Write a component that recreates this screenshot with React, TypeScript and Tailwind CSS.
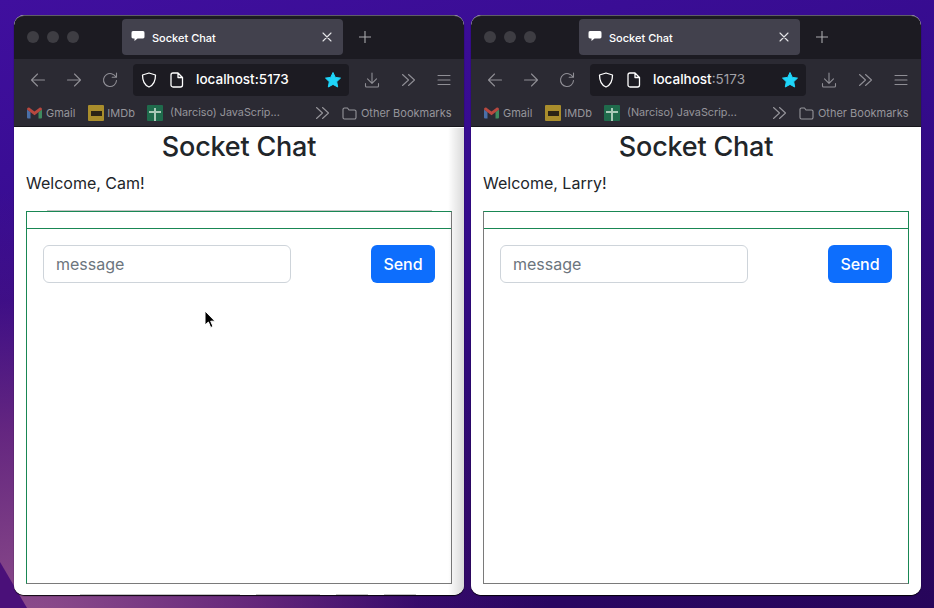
import React from 'react';

const stroke = { fill: 'none', stroke: 'currentColor', strokeWidth: 1.1, strokeLinecap: 'round', strokeLinejoin: 'round' } as const;

const Back = () => (
  <svg width="16" height="16" viewBox="0 0 16 16" {...stroke}><path d="M14.500 8H1.500M7.500 2 1.500 8l6 6" /></svg>
);
const Forward = () => (
  <svg width="16" height="16" viewBox="0 0 16 16" {...stroke}><path d="M1.500 8h13M8.500 2l6 6-6 6" /></svg>
);
const Reload = () => (
  <svg width="16" height="16" viewBox="0 0 16 16" {...stroke}><path d="M14.500 8.500A6.500 6.500 0 1 1 9.500 1.700c1.800.4 3.400 1.600 4.600 3.300M14.500 1v4.300h-4.300" /></svg>
);
const Shield = () => (
  <svg width="16" height="16" viewBox="0 0 16 16" {...stroke} strokeWidth={1.300}><path d="M8 1 14.500 3c0 6-1.500 10-6.500 12C3 13 1.500 9 1.500 3z" /></svg>
);
const PageIcon = () => (
  <svg width="14" height="16" viewBox="0 0 14 16" {...stroke} strokeWidth={1.300}><path d="M3 1h5l4.500 4.500V13a2 2 0 0 1-2 2H3a2 2 0 0 1-2-2V3a2 2 0 0 1 2-2zM8 1v4.500h4.500" /></svg>
);
const Download = () => (
  <svg width="16" height="16" viewBox="0 0 16 16" {...stroke}><path d="M8 1v10M3.500 6.800 8 11.300l4.500-4.500M1.500 11.500V14a1 1 0 0 0 1 1h11a1 1 0 0 0 1-1v-2.500" /></svg>
);
const Chevrons = () => (
  <svg width="15" height="14" viewBox="0 0 15 14" {...stroke}><path d="m1.500 1.500 6 5.500-6 5.500M7.500 1.500l6 5.500-6 5.500" /></svg>
);
const Menu = () => (
  <svg width="14" height="12" viewBox="0 0 14 12" {...stroke}><path d="M1 1.500h12M1 6h12M1 10.500h12" /></svg>
);
const Folder = () => (
  <svg width="15" height="13" viewBox="0 0 15 13" {...stroke}><path d="M1 2.500a1.500 1.500 0 0 1 1.500-1.500h3L7 3h5.500A1.500 1.500 0 0 1 14 4.500v6a1.500 1.500 0 0 1-1.500 1.500h-10A1.500 1.500 0 0 1 1 10.500z" /></svg>
);
const Gmail = () => (
  <svg width="15" height="12" viewBox="0 0 15 12">
    <path d="M0 2.500v8a1 1 0 0 0 1 1h2.500V5z" fill="#4a6fa8" />
    <path d="M15 2.500v8a1 1 0 0 1-1 1h-2.500V5z" fill="#3f8a5f" />
    <path d="M0 2.500C0 .8 1.500 0 2.800 1l4.700 3.600L12.200 1c1.300-1 2.800-.2 2.800 1.500L7.500 8.200z" fill="#b8483f" />
  </svg>
);
const Imdb = () => (
  <span className="flex w-4 h-4 items-center justify-center bg-[#a98d2c] rounded-[1px]">
    <span className="w-[11px] h-[5px] bg-[#2b2416]" />
  </span>
);
const Sheets = () => (
  <span className="relative flex w-4 h-4 bg-[#1f6b4c] rounded-[1px]">
    <span className="absolute left-[7px] top-[3px] w-[2px] h-[13px] bg-[#a9c9b8]" />
    <span className="absolute left-[2px] top-[6px] w-[12px] h-[2px] bg-[#a9c9b8]" />
  </span>
);
const Cursor = () => (
  <svg className="absolute left-[190px] top-[183px]" width="13" height="19" viewBox="0 0 13 19">
    <path d="M1 1v14l3.400-3 2.300 5.500 2.300-1-2.300-5.300H11z" fill="#000" stroke="#fff" strokeWidth="1" />
  </svg>
);

type BrowserProps = {
  name: string;
  dimPort?: boolean;
  boxClass: string;
  shaded?: boolean;
  withCursor?: boolean;
};

const Browser = ({ name, dimPort, boxClass, shaded, withCursor }: BrowserProps) => (
  <div className="relative w-[450px] h-[580px] flex flex-col rounded-[10px] overflow-hidden bg-white shadow-[0_1px_1px_rgba(0,0,0,0.9)]">
    {/* tab strip */}
    <div className="h-[44px] pb-px flex items-center bg-[#1c1b22] border-t border-[#5f5e66] rounded-t-[10px]">
      <span className="ml-[13px] w-3 h-3 rounded-full bg-[#3e3d43]" />
      <span className="ml-2 w-3 h-3 rounded-full bg-[#3e3d43]" />
      <span className="ml-2 w-3 h-3 rounded-full bg-[#3e3d43]" />
      <div className="ml-[43px] w-[221px] h-9 flex items-center rounded-[4px] bg-[#42414d] text-white">
        <svg className="ml-[9px] -mt-[3px]" width="14" height="12" viewBox="0 0 14 12">
          <path d="M2.500 1h9A1.800 1.800 0 0 1 13.500 3v3.500a1.800 1.800 0 0 1-2 2H6.500L3.500 11V8.500h-1A1.800 1.800 0 0 1 .5 6.500V3a1.800 1.800 0 0 1 2-2z" fill="#fff" />
        </svg>
        <span className="ml-[7px] mt-[2px] text-[11px] font-medium">Socket Chat</span>
        <svg className="ml-auto mr-[11px] text-[#e4e4e7]" width="10" height="10" viewBox="0 0 10 10" {...stroke}>
          <path d="m1 1 8 8M9 1 1 9" />
        </svg>
      </div>
      <svg className="ml-[16px] text-[#a9a9ad]" width="12" height="12" viewBox="0 0 12 12" {...stroke}>
        <path d="M6 0v12M0 6h12" />
      </svg>
    </div>

    {/* toolbar */}
    <div className="h-[41px] flex items-center bg-[#2b2a33] text-[#8f8e95]">
      <span className="ml-4"><Back /></span>
      <span className="ml-5"><Forward /></span>
      <span className="ml-5"><Reload /></span>
      <div className="ml-[15px] w-[216px] h-8 flex items-center rounded-[4px] bg-[#1c1b22] text-white">
        <span className="ml-2"><Shield /></span>
        <span className="ml-[13px]"><PageIcon /></span>
        <span className="ml-3 text-[13.500px] font-medium">
          localhost{dimPort ? <span className="text-[#a3a2a8] font-normal">:5173</span> : ':5173'}
        </span>
        <svg className="ml-auto mr-2" width="16" height="16" viewBox="0 0 16 16">
          <path d="M8 .5l2.300 4.900 5.200.7-3.800 3.600 1 5.300L8 12.400 3.300 15l1-5.300L.5 6.100l5.200-.7z" fill="#1fd5f9" stroke="#1fd5f9" strokeLinejoin="round" />
        </svg>
      </div>
      <span className="ml-[15px]"><Download /></span>
      <span className="ml-[21px]"><Chevrons /></span>
      <span className="ml-[21px]"><Menu /></span>
    </div>

    {/* bookmarks */}
    <div className="h-[27px] flex items-center bg-[#2b2a33] text-[11px] text-[#96959b] border-b border-[#17161c]">
      <span className="ml-[13px]"><Gmail /></span>
      <span className="ml-1">Gmail</span>
      <span className="ml-[13px]"><Imdb /></span>
      <span className="ml-[3px]">IMDb</span>
      <span className="ml-3"><Sheets /></span>
      <span className="ml-[7px] w-[110px] whitespace-nowrap text-[10.800px]">(Narciso) JavaScrip...</span>
      <span className="ml-[35px]"><Chevrons /></span>
      <span className="ml-3"><Folder /></span>
      <span className="ml-1 whitespace-nowrap">Other Bookmarks</span>
    </div>

    {/* page */}
    <div className="relative flex-1 flex flex-col px-3 bg-white text-[#212529]">
      <h1 className="pt-px text-center text-[27px] tracking-[-0.2px] leading-[38px] font-medium">Socket Chat</h1>
      <p className="mt-[5px] text-base leading-6">Welcome, {name}!</p>
      <div className={`mt-4 h-[373px] border ${boxClass}`}>
        <div className="h-4" />
        <div className="border-t border-[#198754] flex justify-between p-4">
          <input
            placeholder="message"
            className="w-[248px] h-[38px] px-3 text-base border border-[#ced4da] rounded-[6px] outline-none placeholder:text-[#6c757d]"
          />
          <button className="w-16 h-[38px] rounded-[6px] bg-[#0d6efd] text-white text-base font-medium">Send</button>
        </div>
      </div>
      {withCursor && <Cursor />}
    </div>
    {shaded && (
      <>
        <div className="absolute right-0 top-[113px] bottom-0 w-[16px] bg-gradient-to-r from-transparent to-black/15" />
        <span className="absolute left-[33px] top-[195px] w-[385px] h-px bg-[#c4c4c4]" />
        <div className="absolute left-[66px] bottom-0 flex gap-4">
          <span className="w-[160px] h-px bg-[#c4c4c4]" />
          <span className="w-16 h-px bg-[#c4c4c4]" />
          <span className="w-8 h-px bg-[#c4c4c4]" />
          <span className="w-8 h-px bg-[#c4c4c4]" />
        </div>
      </>
    )}
  </div>
);

export default function App() {
  return (
    <div
      className="relative w-[934px] h-[608px] overflow-hidden flex gap-[7px] pl-[14px] pt-[15px] font-['Inter','Noto_Sans',sans-serif] bg-[radial-gradient(ellipse_520px_440px_at_30px_630px,#8f4f8c_0%,rgba(118,48,128,0.75)_45%,rgba(80,20,120,0.35)_75%,transparent_100%),linear-gradient(165deg,#400f9e_0%,#340b8c_40%,#2b0768_75%,#27055a_100%)]"
    >
      <svg className="absolute left-0 bottom-0" width="28" height="46" viewBox="0 0 28 46">
        <path d="M0 0 27 46H0z" fill="#4a1079" />
      </svg>
      <Browser name="Cam" boxClass="border-t-[#198754] border-r-[#7a7a7a] border-b-[#7a7a7a] border-l-[#198754]" shaded withCursor />
      <Browser name="Larry" dimPort boxClass="border-t-[#198754] border-r-[#198754] border-b-[#7a7a7a] border-l-[#7a7a7a]" />
    </div>
  );
}
